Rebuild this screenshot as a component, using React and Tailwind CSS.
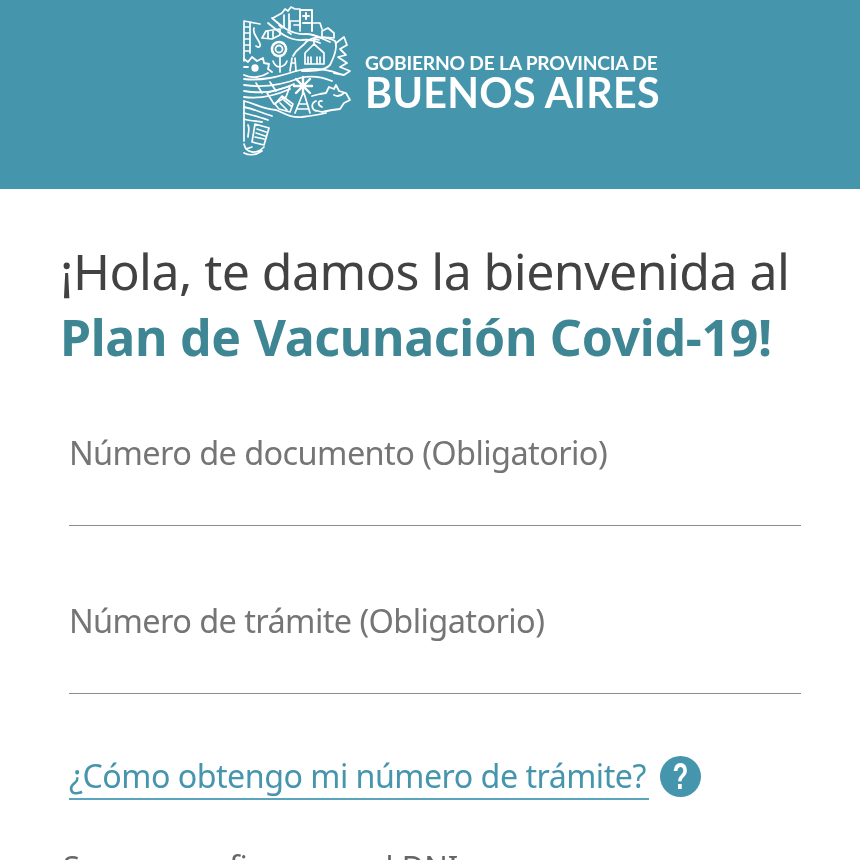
const ubuntu = 'font-["Noto_Sans",sans-serif]'

function Logo() {
  return (
    <svg viewBox="235 0 125 165" className="w-[125px] h-[165px] shrink-0" fill="none" stroke="white" strokeWidth="1.7" strokeLinecap="round" strokeLinejoin="round">
      {/* ladder on the left */}
      <path d="M244 20 V60 M250 21 V52 M244 20 L260 23 M244 26 H250 M244 32 H250 M244 38 H250 M244 44 H250 M244 50 H250" />
      <path d="M254 27 C252 33 258 37 260 43 C261 46 258 47 256 45" />
      {/* bus */}
      <path d="M262 37 L266 30 L280 28 V34 L272 38 Z M268 30 V37 M273 29 V36" />
      {/* buildings */}
      <path d="M273 17 L282 12 L285 8 L288 10 L291 6 L295 8 L300 8 M284 14 V26 M289 13 V28" />
      <path d="M300 26 V9 H312 V30 M306 12 V18 M303 15 H309 M303 22 H310" strokeWidth="2" />
      <path d="M290 28 V20 H300 M294 24 H300 V30" />
      <path d="M312 22 H320 L322 28 M322 36 V30 L328 27 L334 32 V37 Z" />
      {/* road */}
      <path d="M272 17 C282 26 292 34 306 33 C316 33 322 38 330 41 M268 22 C278 30 288 40 302 39 C310 38 316 40 320 42" strokeWidth="1.8" />
      <path d="M279 24 L282 27 M288 31 L291 33" />
      {/* flower */}
      <circle cx="279" cy="48" r="3.5" strokeWidth="1.8" />
      <circle cx="279" cy="48" r="7" strokeWidth="2.6" strokeDasharray="2.2 1.4" />
      <path d="M280 56 V71 M280 66 C276 66 274 63 273 60 M280 66 C284 65 286 63 287 60" />
      {/* gear */}
      <circle cx="255" cy="67" r="2.8" fill="white" />
      <path d="M244 58 L248 61 L252 56 L257 60 L263 57 L264 62 L269 63 L268 68 L272 71 M244 66 L248 66 M244 74 C252 78 262 76 268 72" strokeWidth="1.8" />
      {/* house and hill */}
      <path d="M293 55 C297 47 303 46 306 41 C314 34 328 36 335 40 C338 46 334 56 330 64 C324 70 312 70 302 70" strokeWidth="1.8" />
      <path d="M305 63 V52 L314 43 L324 52 V63 Z M308 56 V62 M311 56 V62 M317 56 V62 M320 56 V62 M314 43 V38 L319 39" />
      {/* chimney */}
      <path d="M290 70 L292 57 M296 70 L295 57 M292 62 H295" />
      {/* right squiggles */}
      <path d="M336 42 L344 36 L347 44 L340 48 L346 54 L338 56 L347 62 L340 66 L350 70 L344 74 L334 72" strokeWidth="1.8" />
      {/* hills */}
      <path d="M244 78 C262 80 278 76 296 70 C312 66 326 68 340 73 M244 84 C264 87 282 84 300 77 C312 74 322 76 332 80 M244 90 C262 93 280 90 294 83 M244 96 C258 98 272 96 290 88" strokeWidth="1.8" />
      <path d="M256 82 L262 92 M270 81 L276 90" />
      {/* windmill */}
      <circle cx="303" cy="85" r="1.6" fill="white" />
      <path d="M303 82 V76 M303 88 V93 M300 85 H294 M306 85 H312 M301 83 L296 78 M305 83 L310 78 M301 87 L296 92 M305 87 L310 92" strokeWidth="2.4" />
      <path d="M303 92 L295 112 M304 92 L310 112 M299 103 H307 M297 108 H309" />
      {/* boat and silo */}
      <path d="M267 92 L290 85 L286 96 L274 103 Z" />
      <path d="M275 103 L282 95 L293 103 L290 111 L279 108 Z M280 102 L287 109 M284 99 L291 105" />
      {/* cow */}
      <path d="M312 95 L320 93 L326 92 L329 86 L334 88 L336 84 L339 90 L346 92 L350 99 L344 102 L340 108 L332 109 L322 111 L314 109 M316 100 C311 102 311 108 316 110 M322 100 C318 99 317 104 322 106 M334 94 C338 96 342 94 344 92" strokeWidth="1.8" />
      {/* waves */}
      <path d="M244 100 C256 103 262 108 276 109 C284 112 290 117 302 116 C310 115 318 114 326 112 M244 106 C254 108 262 112 272 115 M244 112 C252 114 260 116 268 119 M244 118 C250 120 256 120 262 121" strokeWidth="1.8" />
      {/* book */}
      <path d="M255 123 L269 127 L264 144 L252 141 Z M257 128 L266 131 M256 132 L265 135 M255 136 L264 138" />
      <path d="M244 100 V140 M248 124 C250 128 248 132 248 136 M244 143 C246 152 256 154 264 146 M246 148 L252 146 M244 152 C250 155 256 154 262 150" />
    </svg>
  )
}

function Field({ label }) {
  return (
    <div className="border-b border-[#8c8c8c] h-[93px] ml-[69px] mr-[59px]">
      <p className={`${ubuntu} text-[32.5px] leading-[40px] text-[#757575] tracking-[-0.6px] whitespace-nowrap`}>{label}</p>
    </div>
  )
}

export default function App() {
  return (
    <div className="h-screen overflow-hidden bg-white">
      <div className="blur-[0.5px]">
        <header className="bg-[#4595ad] h-[189px] flex pl-[235px] pt-[1px]">
          <Logo />
          <div className="ml-[5px] pt-[52px] font-['Lato',sans-serif] font-bold text-white">
            <div className="text-[19.2px] h-[20px] leading-[20px] whitespace-nowrap tracking-[-0.2px]">GOBIERNO DE LA PROVINCIA DE</div>
            <div className="text-[41.2px] h-[38px] leading-[38px] whitespace-nowrap tracking-[0.3px]">BUENOS AIRES</div>
          </div>
        </header>

        <main className="pt-[49px]">
          <h1 className={`${ubuntu} ml-[60px] text-[50px] leading-[66px] whitespace-nowrap text-[#424242] tracking-[-0.55px]`}>
            ¡Hola, te damos la bienvenida al
            <br />
            <span className="font-bold text-[#3f8694] tracking-[-0.3px]">Plan de Vacunación Covid-19!</span>
          </h1>

          <div className="mt-[63px] flex flex-col gap-[75px]">
            <Field label="Número de documento (Obligatorio)" />
            <Field label="Número de trámite (Obligatorio)" />
          </div>

          <div className="mt-[59px] ml-[69px] flex items-center gap-[11px]">
            <a className={`${ubuntu} text-[#4595ad] text-[32.2px] h-[45px] leading-[45px] border-b-2 border-[#5aa5b9] box-content pr-[3px] tracking-[-0.5px] whitespace-nowrap`}>
              ¿Cómo obtengo mi número de trámite?
            </a>
            <span className="w-[41px] h-[41px] rounded-full bg-[#4595ad] flex items-center justify-center text-white font-['Liberation_Sans',sans-serif] font-bold text-[37px] leading-none">
              <span className="scale-x-[0.7]">?</span>
            </span>
          </div>

          <p className={`${ubuntu} mt-[46px] ml-[63px] text-[31px] leading-[40px] text-[#666] whitespace-nowrap`}>Sexo como figura en el DNI</p>
        </main>
      </div>
    </div>
  )
}
